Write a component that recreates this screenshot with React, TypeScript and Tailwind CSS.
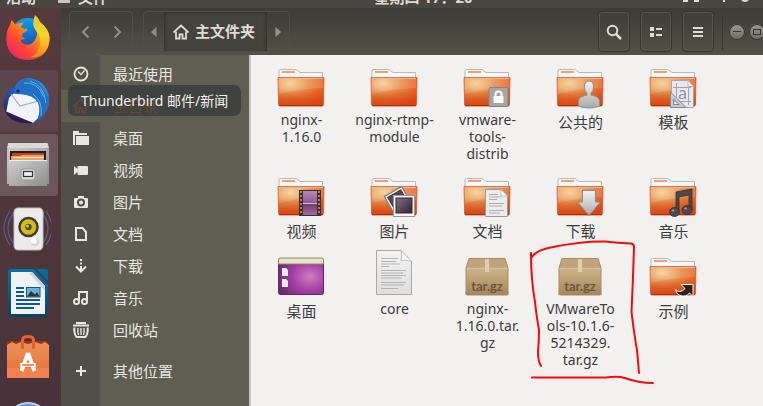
import React from "react";

const places = [
  { name: "最近使用", icon: "recent" },
  { name: "主目录", icon: "home", active: true },
  { name: "桌面", icon: "folder" },
  { name: "视频", icon: "video" },
  { name: "图片", icon: "camera" },
  { name: "文档", icon: "doc" },
  { name: "下载", icon: "download" },
  { name: "音乐", icon: "music" },
  { name: "回收站", icon: "trash" },
];

type FileEntry = { kind: string; lines: string[]; cjk?: boolean };

const files: FileEntry[] = [
  { kind: "plain", lines: ["nginx-", "1.16.0"] },
  { kind: "plain", lines: ["nginx-rtmp-", "module"] },
  { kind: "lock", lines: ["vmware-", "tools-", "distrib"] },
  { kind: "public", lines: ["公共的"], cjk: true },
  { kind: "template", lines: ["模板"], cjk: true },
  { kind: "video", lines: ["视频"], cjk: true },
  { kind: "photo", lines: ["图片"], cjk: true },
  { kind: "docs", lines: ["文档"], cjk: true },
  { kind: "down", lines: ["下载"], cjk: true },
  { kind: "music", lines: ["音乐"], cjk: true },
  { kind: "desktop", lines: ["桌面"], cjk: true },
  { kind: "text", lines: ["core"] },
  { kind: "box", lines: ["nginx-", "1.16.0.tar.", "gz"] },
  { kind: "box", lines: ["VMwareTo", "ols-10.1.6-", "5214329.", "tar.gz"] },
  { kind: "link", lines: ["示例"], cjk: true },
];

function Gradients() {
  return (
    <svg width="0" height="0" className="absolute" aria-hidden="true">
      <defs>
        <radialGradient id="fo" cx=".27" cy=".2" r=".9">
          <stop offset="0" stopColor="#f6cf94" />
          <stop offset=".45" stopColor="#e58c48" />
          <stop offset="1" stopColor="#ea4a16" />
        </radialGradient>
        <linearGradient id="fshade" x2="0" y2="1">
          <stop offset=".4" stopColor="#c84a10" stopOpacity="0" />
          <stop offset="1" stopColor="#d8400e" stopOpacity=".8" />
        </linearGradient>
        <linearGradient id="silver" x2="0" y2="1">
          <stop offset="0" stopColor="#f4f4f4" />
          <stop offset="1" stopColor="#a9a9a9" />
        </linearGradient>
        <linearGradient id="paper" x2="0" y2="1">
          <stop offset="0" stopColor="#f2f2f2" />
          <stop offset="1" stopColor="#dedede" />
        </linearGradient>
        <linearGradient id="film" x2="0" y2="1">
          <stop offset="0" stopColor="#b48ab5" />
          <stop offset=".5" stopColor="#8a5a92" />
          <stop offset=".52" stopColor="#6c3a6e" />
          <stop offset="1" stopColor="#a56a9c" />
        </linearGradient>
        <linearGradient id="photo" x2="1" y2="1">
          <stop offset="0" stopColor="#8a6f86" />
          <stop offset="1" stopColor="#2c2430" />
        </linearGradient>
        <radialGradient id="desk" cx=".7" cy=".5" r=".75">
          <stop offset="0" stopColor="#d17cc0" />
          <stop offset=".5" stopColor="#a840a6" />
          <stop offset="1" stopColor="#682a74" />
        </radialGradient>
        <linearGradient id="carton" x2="0" y2="1">
          <stop offset="0" stopColor="#d0b58a" />
          <stop offset="1" stopColor="#a4855b" />
        </linearGradient>
        <linearGradient id="bag" x2="0" y2="1">
          <stop offset="0" stopColor="#e8935a" />
          <stop offset="1" stopColor="#ea6c32" />
        </linearGradient>
        <linearGradient id="ffbody" x1="1" y1="0" x2="0" y2="1">
          <stop offset="0" stopColor="#ffe226" />
          <stop offset=".35" stopColor="#ff9a1a" />
          <stop offset=".62" stopColor="#ff4a30" />
          <stop offset="1" stopColor="#e3158c" />
        </linearGradient>
        <linearGradient id="fftail" x2="0" y2="1">
          <stop offset="0" stopColor="#d9d23a" />
          <stop offset=".5" stopColor="#ffd02a" />
          <stop offset="1" stopColor="#ff8a1c" />
        </linearGradient>
        <linearGradient id="ffblue" x2="0" y2="1">
          <stop offset="0" stopColor="#0aa0f0" />
          <stop offset="1" stopColor="#223a98" />
        </linearGradient>
        <linearGradient id="tb" x1="1" y1="0" x2="0" y2="1">
          <stop offset="0" stopColor="#35a0e6" />
          <stop offset=".5" stopColor="#1b62bd" />
          <stop offset="1" stopColor="#251456" />
        </linearGradient>
        <linearGradient id="writer" x2="0" y2="1">
          <stop offset="0" stopColor="#0a6faa" />
          <stop offset="1" stopColor="#064568" />
        </linearGradient>
        <linearGradient id="cab" x1="0" y1="0" x2="1" y2="1">
          <stop offset="0" stopColor="#cfcfcf" />
          <stop offset="1" stopColor="#8e8e8e" />
        </linearGradient>
      </defs>
    </svg>
  );
}

function Folder() {
  return (
    <g>
      <path d="M2 18V11q0-1.500 1.500-1.500H18q1.500 0 2.500 1l2.500 2H45.500V19H2z" fill="#f7f7f7" stroke="#b9b9b9" />
      <rect x="5" y="11" width="13" height="2" fill="#f0a070" />
      <path d="M1 17.500H47L46.500 44q0 2-1.500 2H3q-1.500 0-1.500-2z" fill="url(#fo)" />
      <path d="M1 17.500H47L46.500 44q0 2-1.500 2H3q-1.500 0-1.500-2z" fill="url(#fshade)" stroke="#cf6134" strokeWidth=".8" />
      <path d="M2 18.500H46V28Q25 28 2 34z" fill="#fff" opacity=".13" />
      <path d="M2 18.500H46" stroke="#f3b787" />
      <path d="M2 45.600H46" stroke="#a92f0c" />
    </g>
  );
}

function Badge({ kind }: { kind: string }) {
  switch (kind) {
    case "lock":
      return (
        <g>
          <rect x="26" y="27.500" width="19" height="19" rx="1" fill="#a6a8a0" stroke="#83857e" />
          <rect x="30.500" y="36" width="10" height="7" rx="1" fill="#fff" />
          <path d="M32.500 37v-3q0-2.500 3-2.500t3 2.500v3" fill="none" stroke="#fff" strokeWidth="2" />
        </g>
      );
    case "public":
      return (
        <path
          d="M33 21q4.500 0 4.500 6q0 4-2.500 6v2q8 1.500 8.500 5.500V46q-4 2-10.500 2T22.500 46V40.500Q23 36.500 31 35V33q-2.500-2-2.500-6q0-6 4.500-6z"
          fill="url(#silver)"
          stroke="#8e8e8e"
        />
      );
    case "template":
      return (
        <g>
          <path d="M22.500 20.500H39l5.500 6V47.500H22.500z" fill="#e9e9ec" stroke="#a7a7af" />
          <path d="M39 20.500v6h5.500z" fill="#fff" stroke="#b9b9bf" />
          <path d="M24 27.500H42M24 41.500H42M27.500 23V43M39.500 27V45" stroke="#a2a2b4" />
          <text x="29" y="39" fontSize="16" fontFamily="Noto Sans, sans-serif" fill="#9292a4">a</text>
          <path d="M21.500 32L37 47.500H21.500zM24.500 39v5.500H30z" fill="#c8c8d2" fillRule="evenodd" stroke="#87879a" />
        </g>
      );
    case "video":
      return (
        <g>
          <rect x="22" y="21" width="22" height="26" fill="#333" />
          <rect x="26" y="22" width="14" height="24" fill="url(#film)" />
          <path d="M24 22V46M42 22V46" stroke="#c9744b" strokeWidth="2" strokeDasharray="2 2" />
          <path d="M26 34.500H40" stroke="#d9b5d8" />
        </g>
      );
    case "photo":
      return (
        <g>
          <g transform="rotate(-30 25 30)">
            <rect x="17" y="22.500" width="20" height="19" fill="#eee" stroke="#777" />
            <rect x="19.500" y="25" width="15" height="13" fill="#55465a" stroke="#333" />
          </g>
          <rect x="23.500" y="26.500" width="21" height="21" fill="#f7f7f7" stroke="#999" />
          <rect x="26" y="29" width="16" height="15" fill="url(#photo)" stroke="#2b2430" />
        </g>
      );
    case "docs":
      return (
        <g>
          <path d="M22.500 20.500H38l6.500 7V47.500H22.500z" fill="#ececec" stroke="#9a9a9a" />
          <path d="M38 20.500v6.500h6.500z" fill="#fff" stroke="#bbb" />
          <path d="M26 25.500h9M26 28h12M26 30.500h8M26 34.500h15M26 37h13M26 41.500h15M26 44h11" stroke="#adadad" />
        </g>
      );
    case "down":
      return <path d="M26.500 21.500H39.500V33H44.500L33 46.500 21.500 33H26.500z" fill="url(#silver)" stroke="#8a8a8a" />;
    case "music":
      return (
        <g fill="#4b4b4b" stroke="#2e2e2e" strokeWidth=".8">
          <path d="M27 23L43 20V41H40V26L30 28V43H27z" />
          <ellipse cx="25.500" cy="43" rx="5" ry="4.500" />
          <ellipse cx="38" cy="41" rx="5" ry="4.500" />
          <ellipse cx="24" cy="41.500" rx="1.500" ry="1" fill="#999" stroke="none" />
          <ellipse cx="36.500" cy="39.500" rx="1.500" ry="1" fill="#999" stroke="none" />
        </g>
      );
    case "link":
      return (
        <path
          d="M32 35.500H44V47.500L40.500 44Q37 48.500 31 46.500Q27 45 26.500 40.500Q31 45 36 39.500z"
          fill="#2b2320"
          stroke="#fff"
        />
      );
    default:
      return null;
  }
}

function FileIcon({ kind }: { kind: string }) {
  let art: React.ReactNode;
  if (kind === "desktop") {
    art = (
      <g>
        <rect x="1.500" y="9.500" width="45" height="36" rx="2" fill="url(#desk)" stroke="#6a2463" />
        <path d="M1.500 15V11q0-2 2-2h41q2 0 2 2v4z" fill="#e5e4cb" stroke="#8a8765" />
        <path d="M5 19h4l2 2v6H5zM5 30h4l2 2v6H5z" fill="#f3ecf3" />
      </g>
    );
  } else if (kind === "text") {
    art = (
      <g>
        <path d="M6.500 1.500H31l10.500 11V45.500H6.500z" fill="url(#paper)" stroke="#a8a8a8" />
        <path d="M31 1.500q2 6 0 10q5-1 10.500 1z" fill="#fff" stroke="#c0c0c0" />
        <path
          d="M11 9.500H28M11 12.500H26M11 15H30M11 17.500H19M11 21.500H36M11 24H33M11 26.500H36M11 29H32M11 33.500H36M11 36H34M11 39.500H28"
          stroke="#b4b4b4"
        />
      </g>
    );
  } else if (kind === "box") {
    art = (
      <g>
        <path d="M2 44h44" stroke="#bcbab4" strokeWidth="3" />
        <path d="M6 9.500H42L45 19H3z" fill="#c2a47b" stroke="#ab8d63" />
        <rect x="3" y="18.500" width="42" height="27.500" rx="1" fill="url(#carton)" stroke="#a98c62" />
        <path d="M3.500 19H44.500" stroke="#e2cda7" />
        <rect x="22" y="10" width="4" height="13" fill="#e0cdae" />
        <text x="24" y="42" textAnchor="middle" fontSize="13" fontWeight="bold" fontFamily="Lato, sans-serif" fill="#6f583a">
          tar.gz
        </text>
      </g>
    );
  } else {
    art = (
      <g>
        <Folder />
        <Badge kind={kind} />
      </g>
    );
  }
  return (
    <svg viewBox="0 0 48 48" className="h-12 w-12 shrink-0 overflow-visible" aria-hidden="true">
      {art}
    </svg>
  );
}

function PlaceIcon({ kind }: { kind: string }) {
  const art: Record<string, React.ReactNode> = {
    recent: (
      <g fill="none" stroke="currentColor">
        <circle cx="8" cy="8" r="6.500" strokeWidth="1.800" />
        <path d="M5 5.500L8 8.500 11.500 4.500" strokeWidth="1.300" />
      </g>
    ),
    home: (
      <g>
        <path d="M.5 8.500L8 1.500l7.500 7" fill="none" stroke="currentColor" strokeWidth="1.800" />
        <path d="M3 7.500V14.500H6.500V10.500H9.500V14.500H13V7.500" fill="none" stroke="currentColor" strokeWidth="1.800" />
      </g>
    ),
    folder: (
      <g fill="currentColor">
        <path d="M0 1H6V3H14V5H2V15H0z" />
        <rect x="3" y="6" width="13" height="9" />
      </g>
    ),
    video: <path d="M1 4l3.500 3V5q0-1 1-1H14q1 0 1 1v7q0 1-1 1H5.500q-1 0-1-1v-2L1 13z" fill="currentColor" />,
    camera: (
      <g>
        <path d="M2 4H5V2H11V4H14q1 0 1 1v8q0 1-1 1H2q-1 0-1-1V5q0-1 1-1z" fill="currentColor" />
        <circle cx="8" cy="8.500" r="3" fill="none" stroke="#504f48" strokeWidth="2" />
      </g>
    ),
    doc: <path d="M3 2H9.500L13 6V14H3z" fill="none" stroke="currentColor" strokeWidth="2" />,
    download: (
      <g fill="none" stroke="currentColor" strokeWidth="2">
        <path d="M8 1v2M8 4.500v2M8 8v5" />
        <path d="M3 8.500L8 13.500 13 8.500" />
      </g>
    ),
    music: (
      <g fill="none" stroke="currentColor" strokeWidth="2">
        <circle cx="3.500" cy="11.500" r="2.500" />
        <circle cx="11.500" cy="11.500" r="2.500" />
        <path d="M6 11.500V2H14V11.500" />
      </g>
    ),
    trash: (
      <g fill="none" stroke="currentColor">
        <path d="M3 1H13M0 3.500H16" strokeWidth="2" />
        <path d="M1.500 5.500Q.5 11 3.500 15H12.500Q15.500 11 14.500 5.500" strokeWidth="2" />
        <path d="M5 6Q4.500 10 5.500 13M8 6V13M11 6Q11.500 10 10.500 13" strokeWidth="1.400" />
      </g>
    ),
    plus: <path d="M8 3V13M3 8H13" stroke="currentColor" strokeWidth="2" />,
  };
  return (
    <svg viewBox="0 0 16 16" className="h-4 w-4 shrink-0" aria-hidden="true">
      {art[kind]}
    </svg>
  );
}

function Firefox() {
  return (
    <svg viewBox="0 0 48 48" className="h-12 w-12" aria-hidden="true">
      <circle cx="25" cy="22" r="18" fill="url(#ffblue)" />
      <path
        d="M3.500 22Q3.500 16 6.500 12L8.500 6Q11 8 12 10.500Q16 8.500 21 8.500Q18 11 18 13.500Q21 15 24.500 15Q24 17.500 20.500 19Q18.500 20 18.500 22Q21 23 22 25Q17 25 18 28Q22 32 28 30Q32 28 34 21Q35 13 31 9L37 8Q47 16 46.500 26Q45 44 26 46Q8 46 4 31Q3 26 3.500 22z"
        fill="url(#ffbody)"
      />
      <path
        d="M32 1Q36 4 37.500 8.500Q45 14 46.500 23Q47 35 38 41Q33 44 27 43Q36 40 37 31Q38 22 33 17Q28 10 32 1z"
        fill="url(#fftail)"
      />
    </svg>
  );
}

function Thunderbird() {
  return (
    <svg viewBox="0 0 48 48" className="h-12 w-12" aria-hidden="true">
      <path
        d="M12 11Q14 1 26 1Q38 2 44 13Q49 25 43 35Q37 46 27 46.500Q9 45 2 34Q-2 26 5 14Q7 10 12 11z"
        fill="url(#tb)"
      />
      <path d="M3 36L6 21Q10 15 18 16L40 22 35 41 30 46z" fill="#f1f3f6" />
      <path d="M8 17L17 29 39 23" fill="none" stroke="#a5afbb" strokeWidth="1.200" />
      <path d="M12 17Q10 7 19 3Q32 0 39 10L46 22Q46 36 35 43Q39 28 32 22Q26 17 12 17z" fill="#226fc4" />
      <path d="M21 6Q34 4 41 20M27 4Q41 8 43 26M30 17Q40 24 38 39" fill="none" stroke="#58b5ed" />
      <path d="M2 34L30 46Q12 48 4 38z" fill="#2b195c" />
      <circle cx="15" cy="14" r="1.500" fill="#111b3c" />
    </svg>
  );
}

function Cabinet() {
  return (
    <svg viewBox="0 0 48 48" className="h-12 w-12" aria-hidden="true">
      <path d="M5 2H45L46 9V43H4V9z" fill="url(#cab)" />
      <path d="M6 2H44L46 7H4z" fill="#d9d9d9" />
      <rect x="7" y="10" width="36" height="11" fill="#25201f" />
      <path d="M9 12H41V21H9z" fill="#c0441f" />
      <path d="M8 15H17L19 14H41V20H8z" fill="#f0a060" />
      <path d="M10 16.500H40" stroke="#fff0d0" />
      <path d="M6 19H44V45H6z" fill="url(#cab)" />
      <path d="M6 19.500H44" stroke="#eee" />
      <rect x="18" y="28" width="14" height="11" rx="2" fill="#dadada" stroke="#9a9a9a" />
      <rect x="20.500" y="30.500" width="9" height="5" fill="#eee" stroke="#333" strokeWidth="1.200" />
    </svg>
  );
}

function Rhythmbox() {
  return (
    <svg viewBox="0 0 48 48" className="h-12 w-12" aria-hidden="true">
      <path
        d="M7 6Q-5 23 7 40M10 9Q0 23 10 38M43 6Q55 23 43 40M40 9Q50 23 40 38"
        fill="none"
        stroke="#5b6a94"
        strokeWidth="1.300"
        opacity=".8"
      />
      <path d="M14 3H37Q41 4 40 12V39Q40 45 36 45H15Q11 45 11 40V11Q10 4 14 3z" fill="#ebebe9" stroke="#bdbdbd" />
      <circle cx="25.500" cy="22" r="10.300" fill="#3b3b37" />
      <circle cx="25.500" cy="22" r="7.800" fill="#d7bd13" />
      <circle cx="25.500" cy="22" r="3.200" fill="#514d31" />
      <circle cx="24.500" cy="21" r="1.500" fill="#bbb" />
      <circle cx="32" cy="37" r="4" fill="#d2d2cf" />
      <circle cx="31" cy="36" r="3" fill="#fff" />
    </svg>
  );
}

function Writer() {
  return (
    <svg viewBox="0 0 48 48" className="h-12 w-12" aria-hidden="true">
      <path d="M8 0H31L45 15V45Q45 48 42 48H8Q5 48 5 45V3Q5 0 8 0z" fill="url(#writer)" />
      <path d="M33 0H43Q45 0 45 2V12z" fill="#0a6ba3" />
      <path d="M8 3H29L42 17V45H8z" fill="#f1f1f1" />
      <path d="M29 3L42 17V22L26 4z" fill="#cfd6d9" />
      <path d="M13 19H21M13 23H21M13 27H21M13 31H37M13 35H37M13 39H31" stroke="#0b5c8c" strokeWidth="2" />
      <rect x="23.500" y="18.500" width="13.500" height="9.500" fill="#67b0df" stroke="#0b5c8c" />
      <path d="M24 27.500L28 22 32 25.500 34 23 36.500 27.500z" fill="#333" />
    </svg>
  );
}

function Software() {
  return (
    <svg viewBox="0 0 48 48" className="h-12 w-12" aria-hidden="true">
      <path d="M4 9L6 8H43L45 9V15H4z" fill="#9b3210" />
      <path d="M4 12L9 9 13 11 18 9 25 11 32 9 38 11 42 9 46 12V45H4z" fill="url(#bag)" />
      <path d="M4 35H46V45H4z" fill="#f18352" />
      <path d="M19.500 16V7Q19.500 3.500 25 3.500T30.500 7V16" fill="none" stroke="#e5622b" strokeWidth="3" />
      <path d="M25 20L18.500 38M25 20L31.500 38M17 32H33" stroke="#fff" strokeWidth="4" />
      <path d="M19 32H31" stroke="#ed692c" strokeWidth="1.500" />
    </svg>
  );
}

function Help() {
  return (
    <svg viewBox="0 0 48 48" className="h-12 w-12" aria-hidden="true">
      <circle cx="25" cy="27" r="21" fill="#5e93d4" stroke="#b9cfec" strokeWidth="2" />
    </svg>
  );
}

const launchers = [
  { name: "Firefox", Icon: Firefox, tile: "" },
  { name: "Thunderbird", Icon: Thunderbird, tile: "bg-[#5d464b]" },
  { name: "文件", Icon: Cabinet, tile: "bg-[#6c585c]" },
  { name: "Rhythmbox", Icon: Rhythmbox, tile: "" },
  { name: "LibreOffice Writer", Icon: Writer, tile: "" },
  { name: "Ubuntu 软件", Icon: Software, tile: "" },
  { name: "帮助", Icon: Help, tile: "" },
];

const headerButton =
  "flex h-[41px] w-8 items-center justify-center rounded-[4px] border border-[#35342f] text-[#dfdbd2] shadow-[inset_0_0_0_1px_#57554e]";

function Header() {
  return (
    <header className="flex h-[47px] shrink-0 items-center bg-linear-to-b from-[#3c3b37] to-[#545149] pl-2">
      <div className="flex h-[41px] w-16 shrink-0 rounded-[4px] border border-[#504e48] text-[#8f8d87]">
        <button aria-label="后退" className="flex flex-1 items-center justify-center">
          <svg viewBox="0 0 16 16" className="h-4 w-4"><path d="M10.500 2.500L5 8l5.500 5.500" fill="none" stroke="currentColor" strokeWidth="2" /></svg>
        </button>
        <button aria-label="前进" className="flex flex-1 items-center justify-center">
          <svg viewBox="0 0 16 16" className="h-4 w-4"><path d="M5.500 2.500L11 8l-5.500 5.500" fill="none" stroke="currentColor" strokeWidth="2" /></svg>
        </button>
      </div>
      <nav aria-label="路径" className="ml-[10px] flex h-[41px] shrink-0 overflow-hidden rounded-[4px] border border-[#504e48]">
        <button aria-label="上级" className="flex w-5 items-center justify-center">
          <svg viewBox="0 0 6 10" className="h-[10px] w-[6px]"><path d="M5.500 0V10L0 5z" fill="#8f8d87" /></svg>
        </button>
        <button className="flex items-center gap-[6px] border-x border-[#35342f] bg-[#44433e] pr-[11px] pl-2 text-[15px] font-bold text-[#dfdbd2] shadow-[inset_0_1px_3px_#2f2e2a]">
          <PlaceIcon kind="home" />
          <span>主文件夹</span>
        </button>
        <button aria-label="下级" className="flex w-[22px] items-center justify-center">
          <svg viewBox="0 0 6 10" className="h-[10px] w-[6px]"><path d="M.5 0V10L6 5z" fill="#98968f" /></svg>
        </button>
      </nav>
      <div className="ml-auto flex shrink-0 items-center gap-[10px]">
        <button aria-label="搜索" className={headerButton}>
          <svg viewBox="0 0 16 16" className="h-4 w-4"><circle cx="6.500" cy="6.500" r="4.800" fill="none" stroke="currentColor" strokeWidth="2" /><path d="M10 10l5 5" stroke="currentColor" strokeWidth="2.500" /></svg>
        </button>
        <button aria-label="列表视图" className={headerButton}>
          <svg viewBox="0 0 16 16" className="h-4 w-4"><path d="M2 3h4v4H2zM2 9h4v4H2zM8 4h6v2H8zM8 10h6v2H8z" fill="currentColor" /></svg>
        </button>
        <button aria-label="菜单" className={headerButton}>
          <svg viewBox="0 0 16 16" className="h-4 w-4"><path d="M3 3h10v2H3zM3 7h10v2H3zM3 11h10v2H3z" fill="currentColor" /></svg>
        </button>
      </div>
      <div className="ml-[8px] h-9 w-px shrink-0 bg-[#383732]" />
      <div className="ml-[6px] flex w-[34px] shrink-0 gap-[4px] overflow-hidden">
        <button aria-label="最小化" className="flex h-4 w-4 shrink-0 items-center justify-center rounded-full bg-linear-to-b from-[#989791] to-[#6e6d67] ring-1 ring-[#33322e] ring-inset">
          <span className="h-px w-2 bg-[#33322e]" />
        </button>
        <button aria-label="最大化" className="flex h-4 w-4 shrink-0 items-center justify-center rounded-full bg-linear-to-b from-[#989791] to-[#6e6d67] ring-1 ring-[#33322e] ring-inset">
          <span className="h-[6px] w-2 border border-[#33322e]" />
        </button>
      </div>
    </header>
  );
}

function PlaceRow({ name, icon, active }: { name: string; icon: string; active?: boolean }) {
  return (
    <li>
      <a href="#" className={`flex h-8 items-center text-[15px] ${active ? "text-[#f0683c]" : "text-[#e8e6e0]"}`}>
        <span className={`flex h-full w-[39px] items-center justify-center ${active ? "bg-[#605e52]" : ""}`}>
          <PlaceIcon kind={icon} />
        </span>
        <span className="pl-[13px]">{name}</span>
      </a>
    </li>
  );
}

export default function App() {
  return (
    <div className="relative flex h-screen flex-col overflow-hidden bg-[#4d3439] font-['Noto_Sans','Noto_Sans_CJK_SC',sans-serif]">
      <Gradients />
      <div className="flex h-2 shrink-0 items-end justify-between overflow-hidden bg-[#474641] px-[6px] pb-[3px] text-[15px] leading-4 font-bold text-[#dfdbd2]">
        <div className="flex flex-[4] items-center gap-[22px]">
          <span>活动</span>
          <span className="flex items-center gap-2">
            <span className="h-3 w-3 bg-[#c9c6be]" />
            文件
          </span>
        </div>
        <span>星期四 17：20</span>
        <div className="flex flex-[3] items-end justify-end gap-6 pr-2 pb-[3px]">
          <span className="flex gap-[6px]">
            <span className="h-3 w-[5px] bg-[#dfdbd2]" />
            <span className="h-3 w-[5px] bg-[#dfdbd2]" />
          </span>
          <span className="flex gap-4">
            <span className="h-3 w-[2px] bg-[#dfdbd2]" />
            <span className="h-3 w-2 rounded-full bg-[#dfdbd2]" />
          </span>
        </div>
      </div>
      <div className="flex min-h-0 flex-1">
        <nav aria-label="启动器" className="flex w-[61px] shrink-0 flex-col gap-[2px] overflow-hidden bg-linear-to-b from-[#553a3d] to-[#49323a]">
          {launchers.map(({ name, Icon, tile }, i) => (
            <button
              key={name}
              aria-label={name}
              className={`flex w-[58px] shrink-0 items-center justify-center rounded-r-[4px] ${i === 0 ? "h-[60px]" : "h-[62px]"} ${tile} pr-1`}
            >
              <Icon />
            </button>
          ))}
        </nav>
        <div className="flex min-w-0 flex-1 flex-col">
          <Header />
          <div className="flex min-h-0 flex-1">
            <aside className="w-[188px] shrink-0 bg-linear-to-r from-[#504f48] from-[38px] via-[#45443e] via-[38px] to-[#605e52] to-[39px] pt-[3px]">
              <ul>
                {places.map((p) => (
                  <PlaceRow key={p.name} {...p} />
                ))}
              </ul>
              <ul className="pt-[9px]">
                <PlaceRow name="其他位置" icon="plus" />
              </ul>
            </aside>
            <main className="min-w-0 flex-1 border-l-2 border-[#c9c4c0] bg-[#f2f1f0] pt-[5px] pl-[3px]">
              <div className="relative grid w-max grid-cols-[repeat(5,93px)] gap-y-[7px]">
                {files.map((f, i) => (
                  <figure key={i} className="flex flex-col items-center">
                    <FileIcon kind={f.kind} />
                    <figcaption
                      className={`mt-[3px] pl-[2px] text-center whitespace-nowrap text-[#3c3c3c] ${f.cjk ? "text-[15px] leading-[22px]" : "text-[14px] leading-[17px]"}`}
                    >
                      {f.lines.map((line) => (
                        <span key={line} className="block">{line}</span>
                      ))}
                    </figcaption>
                  </figure>
                ))}
                <svg viewBox="524 236 135 155" className="absolute top-[176px] left-[270px] h-[155px] w-[135px]" aria-hidden="true">
                  <path
                    d="M532 257Q530 255 531 253Q531 280 535 302Q537 320 539 330Q539 340 538 352Q538 361 541 366M532 257Q536 250 553 247Q582 241 605 241.500Q618 243 631 243.500Q634 244 634 247Q633 280 631.500 312Q635 340 637 350Q638 362 639 373M532 377.500H606Q618 376 625 378Q638 383 653 383"
                    fill="none"
                    stroke="#f50a0a"
                    strokeWidth="2"
                    strokeLinecap="round"
                    strokeLinejoin="round"
                  />
                </svg>
              </div>
            </main>
          </div>
        </div>
      </div>
      <div role="tooltip" className="absolute top-[85px] left-[68px] rounded-[7px] bg-[#343938]/75 px-[13px] py-1 text-[14px] leading-[23px] whitespace-nowrap text-[#f2f0ec]">
        Thunderbird 邮件/新闻
      </div>
    </div>
  );
}
